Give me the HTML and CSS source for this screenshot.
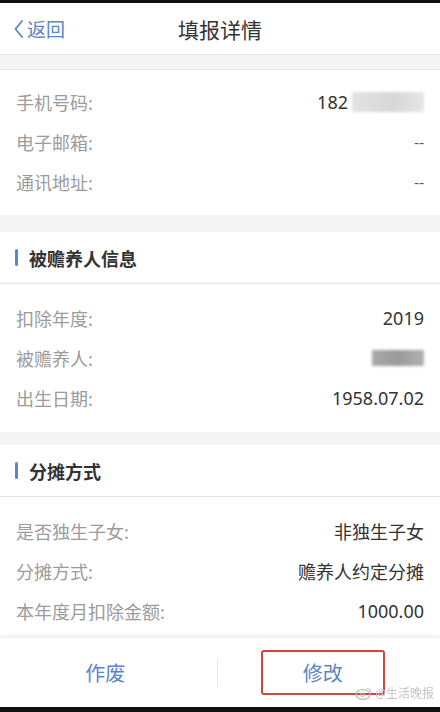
FILE: index.html
```html
<!DOCTYPE html>
<html lang="zh-CN">
<head>
<meta charset="utf-8">
<title>填报详情</title>
<link rel="stylesheet" href="styles.css">
</head>
<body>
<div class="screen">
  <div class="blackbar top"></div>
  <header class="nav">
    <div class="back">
      <svg class="chev" width="10" height="18" viewBox="0 0 10 18"><polyline points="8,1 1.5,9 8,17" fill="none" stroke="#5b86c6" stroke-width="1.8" stroke-linecap="round" stroke-linejoin="round"/></svg>
      <span>返回</span>
    </div>
    <div class="title">填报详情</div>
    <div class="spacer"></div>
  </header>
  <div class="gap g1"></div>
  <section class="card c1">
    <div class="row"><span class="label">手机号码:</span><span class="value">182<span class="blur phone"></span></span></div>
    <div class="row"><span class="label">电子邮箱:</span><span class="value dash">--</span></div>
    <div class="row"><span class="label">通讯地址:</span><span class="value dash">--</span></div>
  </section>
  <div class="gap g2"></div>
  <section class="card">
    <div class="sec-head"><span class="bar"></span>被赡养人信息</div>
    <div class="body b2">
      <div class="row"><span class="label">扣除年度:</span><span class="value">2019</span></div>
      <div class="row"><span class="label">被赡养人:</span><span class="value"><span class="blur name"></span></span></div>
      <div class="row"><span class="label">出生日期:</span><span class="value">1958.07.02</span></div>
    </div>
  </section>
  <div class="gap g3"></div>
  <section class="card">
    <div class="sec-head"><span class="bar"></span>分摊方式</div>
    <div class="body b3">
      <div class="row"><span class="label">是否独生子女:</span><span class="value">非独生子女</span></div>
      <div class="row"><span class="label">分摊方式:</span><span class="value">赡养人约定分摊</span></div>
      <div class="row"><span class="label">本年度月扣除金额:</span><span class="value">1000.00</span></div>
    </div>
  </section>
  <footer class="actions">
    <div class="btn left"><span>作废</span></div>
    <div class="divider"></div>
    <div class="btn right"><span class="boxed">修改</span></div>
    <div class="watermark">
      <svg width="18" height="14" viewBox="0 0 18 14"><ellipse cx="8" cy="8.5" rx="7" ry="4.8" fill="none" stroke="#bbb" stroke-width="1.2"/><circle cx="7.5" cy="9" r="2" fill="none" stroke="#bbb" stroke-width="1"/><path d="M12 2.5 a4 4 0 0 1 4 4" fill="none" stroke="#bbb" stroke-width="1"/></svg>
      <span>@生活晚报</span>
    </div>
  </footer>
  <div class="blackbar bottom"></div>
</div>
</body>
</html>
```
FILE: styles.css
```css
* { box-sizing: border-box; }
html, body { margin: 0; padding: 0; }
body {
  width: 440px;
  height: 712px;
  overflow: hidden;
  background: #f4f4f4;
  font-family: "Noto Sans", "Noto Sans CJK SC", sans-serif;
}
.screen {
  display: flex;
  flex-direction: column;
  width: 440px;
  height: 712px;
}
.blackbar { background: #111; flex: none; }
.blackbar.top { height: 3px; }
.blackbar.bottom { height: 5px; }

.nav {
  flex: none;
  height: 52px;
  background: #fff;
  border-bottom: 1px solid #e4e4e4;
  display: flex;
  align-items: center;
  padding: 0 14px;
}
.back {
  width: 90px;
  display: flex;
  align-items: center;
  gap: 3px;
  color: #5b86c6;
  font-size: 19px;
}
.chev { margin-top: 1px; }
.title {
  flex: 1;
  text-align: center;
  font-size: 21px;
  color: #333;
}
.spacer { width: 90px; }

.gap { flex: none; background: #f4f4f4; }
.g1 { height: 15px; border-bottom: 1px solid #e6e6e6; }
.g2 { height: 17px; }
.g3 { height: 13px; }

.card { background: #fff; flex: none; }
.c1 { padding: 12px 16px 13px; height: 145px; }
.row {
  height: 40px;
  display: flex;
  align-items: center;
  justify-content: space-between;
}
.label { color: #9b9b9b; font-size: 18px; }
.value { color: #333; font-size: 18px; display: flex; align-items: center; }
.value.dash { color: #555; font-size: 15px; }

.sec-head {
  height: 52px;
  border-bottom: 1px solid #e4e4e4;
  display: flex;
  align-items: center;
  padding-left: 15px;
  font-size: 18px;
  font-weight: bold;
  color: #333;
}
.bar {
  width: 3px;
  height: 17px;
  border-radius: 2px;
  background: #5b86c6;
  margin-right: 11px;
}
.body { padding: 0 16px; }
.b2 { padding-top: 14px; height: 148px; }
.b3 { padding-top: 14px; height: 141px; }

.blur { display: inline-block; filter: blur(1.5px); }
.blur.phone {
  width: 72px;
  height: 20px;
  margin-left: 4px;
  background: linear-gradient(90deg, #e2e2e2, #d6d6d6 60%, #e6e6e6);
}
.blur.name {
  width: 52px;
  height: 16px;
  background: linear-gradient(90deg, #a9a9a9, #999 50%, #b0b0b0);
}

.actions {
  flex: 1;
  position: relative;
  background: #fff;
  box-shadow: 0 -2px 5px rgba(0,0,0,0.09);
  display: flex;
  align-items: center;
}
.btn {
  flex: 1;
  display: flex;
  justify-content: center;
  color: #5b86c6;
  font-size: 20px;
}
.btn.left { padding-right: 6px; }
.btn.right { padding-right: 12px; }
.divider {
  width: 1px;
  height: 28px;
  background: #e6e6e6;
}
.boxed {
  display: flex;
  align-items: center;
  justify-content: center;
  width: 124px;
  height: 45px;
  border: 2.5px solid #d2453f;
  border-radius: 3px;
}
.watermark {
  position: absolute;
  right: 6px;
  bottom: 5px;
  display: flex;
  align-items: center;
  gap: 2px;
  color: #c4c4c4;
  font-size: 12px;
  filter: blur(0.4px);
}
```
